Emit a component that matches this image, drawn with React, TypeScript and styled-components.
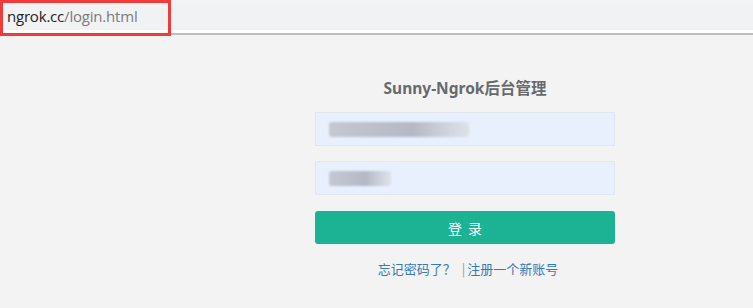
import React from 'react';
import styled, { createGlobalStyle } from 'styled-components';

const GlobalStyle = createGlobalStyle`
  html, body {
    margin: 0;
    padding: 0;
    background: #f3f3f4;
    font-family: "Noto Sans", "Noto Sans CJK SC", sans-serif;
  }
`;

const Screen = styled.div`
  position: relative;
  width: 753px;
  height: 308px;
  overflow: hidden;
  background: #f3f3f4;
`;

// Browser address strip
const AddressBar = styled.div`
  height: 28px;
  margin-top: 2px;
  background: #f1f2f4;
  display: flex;
  align-items: center;
  padding-left: 7px;
  font-family: "Open Sans", "Noto Sans", sans-serif;
  font-size: 15px;
  letter-spacing: -0.2px;
`;

const Host = styled.span`
  color: #222;
`;

const Path = styled.span`
  color: #7b7b7b;
`;

const BarGap = styled.div`
  height: 3px;
  background: #ffffff;
  border-bottom: 2px solid #bdbdbd;
`;

// red annotation box drawn over the url
const Highlight = styled.div`
  position: absolute;
  left: 0;
  top: 0;
  width: 165px;
  height: 30px;
  border: 3px solid #ef3b3b;
`;

const Main = styled.div`
  padding-left: 315px;
  padding-top: 43px;
`;

const Form = styled.div`
  width: 300px;
  display: flex;
  flex-direction: column;
`;

const Title = styled.h3`
  margin: 0 0 14px;
  text-align: center;
  font-size: 15.5px;
  line-height: 20px;
  font-weight: 700;
  color: #676a6c;
`;

const Field = styled.div<{ $top?: number }>`
  height: 32px;
  margin-top: ${(p) => p.$top ?? 0}px;
  background: #e8f0fe;
  border: 1px solid #e2e6ee;
  display: flex;
  align-items: center;
  padding-left: 13px;
`;

const Smudge = styled.div<{ $w: number }>`
  width: ${(p) => p.$w}px;
  height: 15px;
  background: linear-gradient(90deg, #c4c8d2 0%, #b5b9c5 60%, #ccd2dc 82%, #dde2ea 100%);
  filter: blur(1.2px);
  border-radius: 3px;
`;

const LoginButton = styled.button`
  margin-top: 16px;
  height: 33px;
  border: none;
  border-radius: 3px;
  background: #1bb394;
  color: #ffffff;
  font-size: 14px;
  letter-spacing: 6px;
  text-indent: 6px;
  font-family: "Noto Sans CJK SC", sans-serif;
  cursor: pointer;
`;

const Links = styled.div`
  margin-top: 15px;
  text-align: center;
  font-size: 13px;
  color: #337ab7;
  font-family: "Noto Sans CJK SC", sans-serif;
  padding-left: 6px;
`;

const Sep = styled.span`
  color: #999;
  margin: 0 2px 0 6px;
`;

export default function App() {
  return (
    <>
      <GlobalStyle />
      <Screen>
        <AddressBar>
          <Host>ngrok.cc</Host>
          <Path>/login.html</Path>
        </AddressBar>
        <BarGap />
        <Highlight />
        <Main>
          <Form>
            <Title>Sunny-Ngrok后台管理</Title>
            <Field>
              <Smudge $w={140} />
            </Field>
            <Field $top={15}>
              <Smudge $w={62} />
            </Field>
            <LoginButton>登录</LoginButton>
            <Links>
              忘记密码了？<Sep>|</Sep>注册一个新账号
            </Links>
          </Form>
        </Main>
      </Screen>
    </>
  );
}
